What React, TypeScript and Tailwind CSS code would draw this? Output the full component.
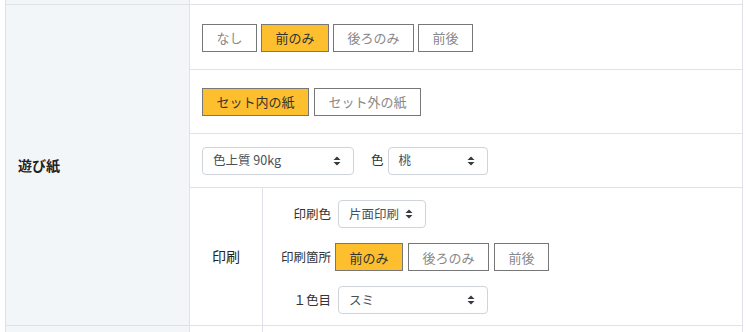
const font = { fontFamily: '"Noto Sans CJK JP", "Noto Sans", sans-serif' };

function ToggleButton({ label, active }: { label: string; active?: boolean }) {
  return (
    <button
      className={
        "h-[28px] px-[13.5px] border border-[#777] text-[13px] leading-none " +
        (active ? "bg-[#fdbf2d] text-[#333]" : "bg-white text-[#888]")
      }
    >
      {label}
    </button>
  );
}

function UpDown() {
  return (
    <svg width="8" height="10" viewBox="0 0 8 10" className="text-[#343a40]">
      <path d="M4 0.5 L7.5 4 H0.5 Z" fill="currentColor" />
      <path d="M4 9.5 L7.5 6 H0.5 Z" fill="currentColor" />
    </svg>
  );
}

function Select({ value, width }: { value: string; width: string }) {
  return (
    <div
      className={
        "h-[28px] flex items-center justify-between pl-[10px] pr-[12px] border border-[#ced4da] rounded-[4px] bg-white text-[12.5px] text-[#495057] " +
        width
      }
    >
      <span>{value}</span>
      <UpDown />
    </div>
  );
}

export default function App() {
  return (
    <div className="w-[749px] h-[332px] bg-white overflow-hidden" style={font}>
      <div className="ml-[5px] w-[738px] border-x border-[#dee2e6]">
        <div className="flex h-[4px]">
          <div className="w-[184px] bg-[#f3f6f8] border-r border-[#dee2e6]" />
          <div className="flex-1" />
        </div>

        <div className="flex border-t border-[#dee2e6]">
          <div className="w-[184px] bg-[#f3f6f8] border-r border-[#dee2e6] flex items-center pl-[12px]">
            <span className="text-[14px] font-bold text-[#222]">遊び紙</span>
          </div>

          <div className="flex-1 flex flex-col">
            <div className="h-[64px] flex items-center gap-[4px] pl-[12px] pt-[1px]">
              <ToggleButton label="なし" />
              <ToggleButton label="前のみ" active />
              <ToggleButton label="後ろのみ" />
              <ToggleButton label="前後" />
            </div>

            <div className="h-[64px] flex items-center gap-[5px] pl-[12px] border-t border-[#dee2e6]">
              <ToggleButton label="セット内の紙" active />
              <ToggleButton label="セット外の紙" />
            </div>

            <div className="h-[54px] flex items-center pl-[12px] border-t border-[#dee2e6]">
              <Select value="色上質 90kg" width="w-[152px]" />
              <span className="ml-[17px] mr-[4px] text-[12.5px] text-[#333]">色</span>
              <Select value="桃" width="w-[100px]" />
            </div>

            <div className="h-[138px] flex border-t border-[#dee2e6]">
              <div className="w-[73px] border-r border-[#dee2e6] flex items-center justify-center">
                <span className="text-[14px] text-[#222]">印刷</span>
              </div>
              <div className="flex-1 flex flex-col gap-[15px] pt-[12px]">
                <div className="flex items-center">
                  <span className="w-[68px] text-right text-[12.5px] text-[#333]">印刷色</span>
                  <div className="ml-[7px]">
                    <Select value="片面印刷" width="w-[88px]" />
                  </div>
                </div>
                <div className="flex items-center">
                  <span className="w-[68px] text-right text-[12.5px] text-[#333]">印刷箇所</span>
                  <div className="ml-[4px] flex gap-[5px]">
                    <ToggleButton label="前のみ" active />
                    <ToggleButton label="後ろのみ" />
                    <ToggleButton label="前後" />
                  </div>
                </div>
                <div className="flex items-center">
                  <span className="w-[68px] text-right text-[12.5px] text-[#333]">１色目</span>
                  <div className="ml-[7px]">
                    <Select value="スミ" width="w-[150px]" />
                  </div>
                </div>
              </div>
            </div>
          </div>
        </div>

        <div className="flex h-[10px] border-t border-[#dee2e6]">
          <div className="w-[184px] bg-[#f3f6f8] border-r border-[#dee2e6]" />
          <div className="w-[73px] border-r border-[#dee2e6]" />
          <div className="flex-1" />
        </div>
      </div>
    </div>
  );
}
